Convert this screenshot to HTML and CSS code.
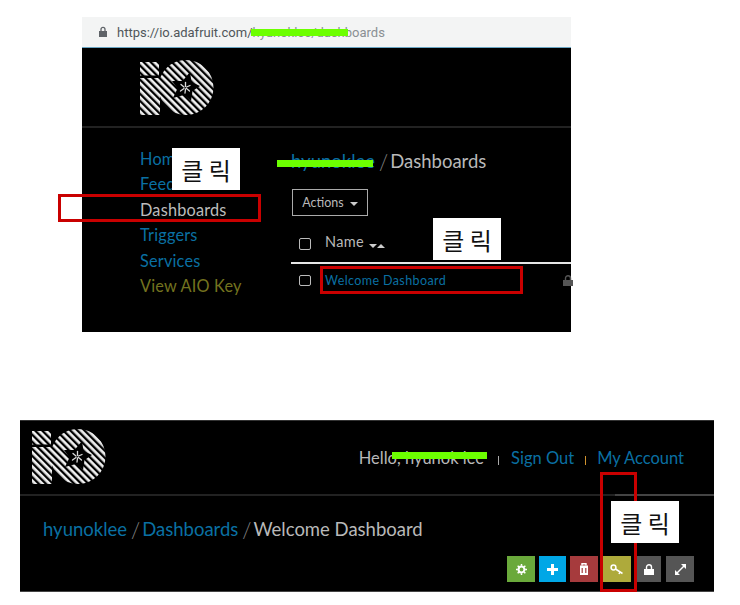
FILE: index.html
```html
<!DOCTYPE html>
<html lang="en">
<head>
    <meta charset="UTF-8">
    <title>Adafruit IO Dashboards</title>
    <link rel="stylesheet" href="styles.css">
</head>
<body>

    <!-- Shared logo -->
    <svg class="defs" width="0" height="0">
        <defs>
            <pattern id="stripes" width="5" height="5" patternUnits="userSpaceOnUse" patternTransform="rotate(45)">
                <rect width="5" height="2.7" y="0" fill="#f0f0f0"></rect>
            </pattern>
            <mask id="ioShape">
                <rect x="0" y="2" width="19" height="13.5" fill="#fff"></rect>
                <rect x="0" y="18" width="20" height="37" fill="#fff"></rect>
                <circle cx="46" cy="27.5" r="27.5" fill="#fff"></circle>
                <polygon points="50,12 51.5,22 60,26 52.5,31 51,41 44,35 33,38 37.5,28.5 32,21 42.5,21" fill="#000"></polygon>
            </mask>
            <symbol id="ioLogo" viewBox="0 0 74 55">
                <rect width="74" height="55" fill="url(#stripes)" mask="url(#ioShape)"></rect>
                <g stroke="#ddd" stroke-width="1.3" stroke-linecap="round">
                    <path d="M45.5 26.5V22.5"></path>
                    <path d="M46.5 27L50 25.5"></path>
                    <path d="M46.5 28.5L49.5 31"></path>
                    <path d="M45.5 29L45 33"></path>
                    <path d="M44 28.5L40.5 31"></path>
                    <path d="M44 27L41 24.5"></path>
                </g>
            </symbol>
        </defs>
    </svg>

    <!-- Top screenshot -->
    <div class="shot shot-top">
        <div class="urlbar">
            <svg class="url-lock" width="10" height="12" viewBox="0 0 10 12">
                <path d="M1 5h8v6H1z" fill="#5f6368"></path>
                <path d="M3 5V3.4a2 2 0 0 1 4 0V5" fill="none" stroke="#5f6368" stroke-width="1.3"></path>
            </svg>
            <span class="url-host">https://io.adafruit.com/</span><span class="url-path">hyunoklee/dashboards</span>
        </div>
        <div class="logo-row">
            <svg class="logo" width="74" height="55"><use href="#ioLogo"></use></svg>
        </div>
        <div class="rule"></div>
        <div class="content">
            <ul class="sidenav">
                <li><a>Home</a></li>
                <li><a>Feeds</a></li>
                <li class="current">Dashboards</li>
                <li><a>Triggers</a></li>
                <li><a>Services</a></li>
                <li class="aio">View AIO Key</li>
            </ul>
            <div class="main">
                <div class="crumbs">
                    <a>hyunoklee</a><span class="slash">/</span><span>Dashboards</span>
                </div>
                <button class="actions">Actions <i class="caret"></i></button>
                <div class="thead">
                    <i class="check"></i>
                    <span>Name</span>
                    <span class="sort"><i class="caret"></i><i class="caret up"></i></span>
                </div>
                <div class="trow">
                    <i class="check small"></i>
                    <a>Welcome Dashboard</a>
                    <svg class="row-lock" width="10" height="11" viewBox="0 0 10 11">
                        <path d="M0 5h10v6H0z" fill="#555"></path>
                        <path d="M2.5 5V3.2a2.5 2.5 0 0 1 5 0V5" fill="none" stroke="#555" stroke-width="1.4"></path>
                    </svg>
                </div>
            </div>
        </div>

        <!-- Annotations -->
        <div class="mark bar bar-url"></div>
        <div class="mark bar bar-user"></div>
        <div class="mark redbox box-nav"></div>
        <div class="mark redbox box-row"></div>
        <div class="mark tag tag-nav">클 릭</div>
        <div class="mark tag tag-row">클 릭</div>
    </div>

    <!-- Bottom screenshot -->
    <div class="shot shot-bottom">
        <div class="head">
            <svg class="logo" width="74" height="55"><use href="#ioLogo"></use></svg>
            <div class="account">
                <span class="hello">Hello, hyunok lee</span>
                <i class="sep"></i>
                <a>Sign Out</a>
                <i class="sep orange"></i>
                <a>My Account</a>
            </div>
        </div>
        <div class="rule dotted"></div>
        <div class="crumbs wide">
            <a>hyunoklee</a><span class="slash">/</span><a>Dashboards</a><span class="slash">/</span><span>Welcome Dashboard</span>
        </div>
        <div class="tools">
            <span class="tool green">
                <svg width="11" height="11" viewBox="0 0 12 12"><circle cx="6" cy="6" r="3.2" fill="none" stroke="#fff" stroke-width="2.2"></circle><path d="M6 0v12M0 6h12M1.8 1.8l8.4 8.4M10.2 1.8l-8.4 8.4" stroke="#fff" stroke-width="1.6" stroke-dasharray="2 8"></path></svg>
            </span>
            <span class="tool blue">
                <svg width="11" height="11" viewBox="0 0 11 11"><path d="M5.5 0v11M0 5.5h11" stroke="#fff" stroke-width="3"></path></svg>
            </span>
            <span class="tool red">
                <svg width="10" height="12" viewBox="0 0 10 12"><path d="M3 2.5V.8h4v1.7" fill="none" stroke="#fff" stroke-width="1.4"></path><path d="M1 2.5h8V12H1z" fill="#fff"></path><path d="M3.2 5v5M6.8 5v5" stroke="#a63b3d" stroke-width="1.2"></path></svg>
            </span>
            <span class="tool yellow">
                <svg width="14" height="11" viewBox="0 0 14 11"><circle cx="3.5" cy="3.5" r="2.4" fill="none" stroke="#fff" stroke-width="1.5"></circle><path d="M5.5 5l7 4.5M10 8l-1 2" fill="none" stroke="#fff" stroke-width="1.5"></path></svg>
            </span>
            <span class="tool gray lock">
                <svg width="10" height="11" viewBox="0 0 10 11"><path d="M0 5h10v6H0z" fill="#fff"></path><path d="M2.5 5V3.2a2.5 2.5 0 0 1 5 0V5" fill="none" stroke="#fff" stroke-width="1.4"></path></svg>
            </span>
            <span class="tool gray expand">
                <svg width="11" height="11" viewBox="0 0 11 11"><path d="M2 9l7-7" stroke="#fff" stroke-width="1.5"></path><path d="M6 0h5v5zM0 6v5h5z" fill="#fff"></path></svg>
            </span>
        </div>

        <!-- Annotations -->
        <div class="mark bar bar-hello"></div>
        <div class="mark redbox box-key"></div>
        <div class="mark tag tag-key">클 릭</div>
    </div>

</body>
</html>
```

FILE: styles.css
```css
/* Base Styling */
body {
    margin: 0;
    width: 740px;
    height: 605px;
    overflow: hidden;
    background-color: #fff;
    font-family: Lato, 'Open Sans', Arial, sans-serif;
}

.defs {
    display: block;
}

a {
    color: #0a70a3;
}

/* Screenshot panels */
.shot {
    position: relative;
    background-color: #000;
    color: #b9b9b9;
}

.shot-top {
    width: 489px;
    height: 315px;
    margin: 17px 0 0 82px;
}

.shot-bottom {
    width: 694px;
    height: 172px;
    margin: 88px 0 0 20px;
    border-top: 1px solid #333;
    border-bottom: 1px solid #444;
    box-sizing: border-box;
}

.logo {
    display: block;
}

.rule {
    height: 2px;
    background-color: #222;
}

.rule.dotted {
    background: linear-gradient(to right, #222 595px, #444 595px);
}

/* Browser url bar */
.urlbar {
    display: flex;
    align-items: center;
    height: 30px;
    padding-left: 16px;
    background-color: #f3f4f4;
    border-bottom: 1px solid #6aa6c4;
    font-family: Roboto, Arial, sans-serif;
    font-size: 13px;
    white-space: nowrap;
}

.url-lock {
    margin-right: 9px;
}

.url-host {
    color: #50565a;
}

.url-path {
    color: #8a8f93;
}

.logo-row {
    height: 78px;
    padding: 12px 0 0 58px;
    box-sizing: border-box;
}

/* Top panel content */
.content {
    display: flex;
    padding-top: 18px;
}

.sidenav {
    width: 151px;
    margin: 0 0 0 58px;
    padding: 0;
    list-style: none;
    font-size: 16.3px;
    letter-spacing: 0.2px;
}

.sidenav li {
    height: 25.4px;
    line-height: 25.4px;
}

.sidenav .current {
    color: #bcbcbc;
}

.sidenav .aio {
    color: #73731f;
}

.main {
    flex: 1;
}

.crumbs {
    display: flex;
    align-items: center;
    height: 30px;
    font-size: 18.5px;
    white-space: nowrap;
}

.crumbs .slash {
    margin: 0 2px 0 4px;
    color: #888;
    font-size: 21px;
    font-weight: 300;
}

.crumbs.wide {
    margin: 18px 0 0 23px;
}

.actions {
    display: block;
    width: 76px;
    height: 27px;
    margin: 13px 0 0 1px;
    padding: 0;
    background-color: #000;
    border: 1px solid #aaa;
    color: #b9b9b9;
    font-family: inherit;
    font-size: 12.5px;
}

.caret {
    display: inline-block;
    width: 0;
    height: 0;
    margin-left: 3px;
    vertical-align: middle;
    border-top: 4px solid #ccc;
    border-left: 4px solid transparent;
    border-right: 4px solid transparent;
}

.caret.up {
    margin-left: 0;
    border-top: none;
    border-bottom: 4px solid #ccc;
}

/* Table */
.thead,
.trow {
    display: flex;
    align-items: center;
}

.thead {
    height: 41px;
    padding-top: 5px;
    border-bottom: 2px solid #e6e6e6;
    font-size: 14.5px;
    letter-spacing: 0.3px;
}

.trow {
    position: relative;
    height: 33px;
    font-size: 12.5px;
    letter-spacing: 0.4px;
}

.check {
    width: 10px;
    height: 10px;
    margin: 4px 14px 0 8px;
    border: 1px solid #bbb;
    border-radius: 2px;
}

.check.small {
    height: 9px;
    margin-top: 0;
}

.thead .sort {
    margin: 5px 0 0 2px;
}

.row-lock {
    margin-left: auto;
    margin-right: -2px;
}

/* Bottom panel header */
.head {
    display: flex;
    justify-content: space-between;
    height: 73px;
    padding: 8px 30px 0 12px;
    box-sizing: border-box;
}

.account {
    display: flex;
    align-items: center;
    height: 57px;
    font-size: 16.5px;
}

.hello {
    margin-right: 2px;
}

.sep {
    width: 1px;
    height: 9px;
    margin: 6px 12px 0;
    background-color: #aaa;
}

.sep.orange {
    margin: 6px 11px 0;
    background-color: #d0922e;
}

/* Bottom panel toolbar */
.tools {
    display: flex;
    justify-content: flex-end;
    gap: 4px;
    margin-top: 12px;
    padding-right: 20px;
}

.tool {
    display: flex;
    align-items: center;
    justify-content: center;
    width: 28px;
    height: 26px;
}

.green {
    background-color: #6aa93b;
}

.blue {
    background-color: #00a7e6;
    width: 27px;
}

.red {
    background-color: #a63b3d;
}

.yellow {
    background-color: #aeaa3b;
    width: 29px;
}

.gray {
    background-color: #555;
}

.lock {
    width: 24px;
    margin-left: 2px;
}

.expand {
    margin-left: 1px;
}

/* Annotations drawn over the screenshots */
.mark {
    position: absolute;
    box-sizing: border-box;
}

.bar {
    height: 7px;
    background-color: #6cff00;
}

.bar-url {
    left: 169px;
    top: 12px;
    width: 97px;
}

.bar-user {
    left: 195px;
    top: 143px;
    width: 96px;
}

.bar-hello {
    left: 372px;
    top: 31px;
    width: 95px;
}

.redbox {
    border: 3px solid #c90000;
}

.box-nav {
    left: -24px;
    top: 177px;
    width: 203px;
    height: 28px;
}

.box-row {
    left: 238px;
    top: 249px;
    width: 203px;
    height: 28px;
}

.box-key {
    left: 580px;
    top: 51px;
    width: 37px;
    height: 120px;
}

.tag {
    display: flex;
    align-items: center;
    justify-content: center;
    width: 68px;
    height: 42px;
    background-color: #fff;
    color: #111;
    font-family: 'Noto Sans CJK KR', sans-serif;
    font-size: 24px;
    white-space: nowrap;
}

.tag-nav {
    left: 90px;
    top: 131px;
}

.tag-row {
    left: 351px;
    top: 201px;
}

.tag-key {
    left: 591px;
    top: 80px;
}
```
